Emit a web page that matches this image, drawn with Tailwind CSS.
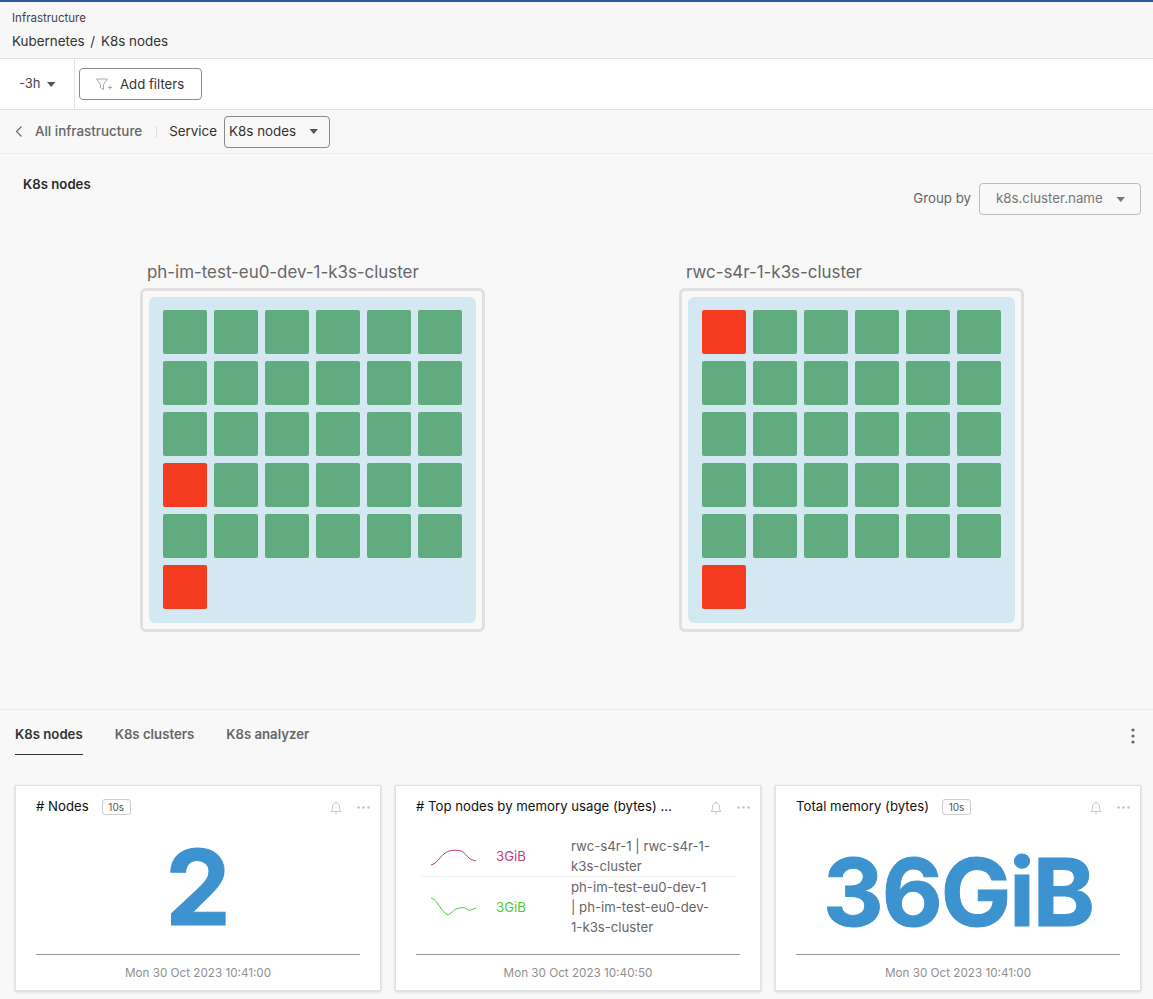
<!DOCTYPE html>
<html lang="en">
<head>
    <meta charset="UTF-8">
    <meta name="viewport" content="width=device-width, initial-scale=1.0">
    <title>K8s nodes</title>
    <script src="https://cdn.jsdelivr.net/npm/@tailwindcss/browser@4"></script>
</head>
<body class="bg-[#f8f8f8] font-['Inter','Liberation_Sans',sans-serif] text-[#333]">
<div class="h-[999px] w-[1153px] overflow-hidden">
    <div class="h-[2px] bg-[#2f5a9f]"></div>

    <header class="h-[57px] border-b border-[#e0e0e0] bg-[#f7f7f7] pl-3 pt-[9px]">
        <p class="text-[11.500px] leading-[14px] text-[#444]">Infrastructure</p>
        <p class="mt-[7px] text-[13.400px] leading-[18px] text-[#333]">Kubernetes <span class="mx-[2px]">/</span> K8s nodes</p>
    </header>

    <div class="flex h-[51px] items-center border-b border-[#e0e0e0] bg-white">
        <div class="flex h-full w-[75px] items-center border-r border-[#e4e4e4] pl-[19px] text-[13px] text-[#444]">
            -3h
            <svg class="ml-[6px]" width="9" height="5" viewBox="0 0 9 5"><path d="M0 0h8.500L4.200 5z" fill="#555"/></svg>
        </div>
        <button class="ml-[4px] flex h-[32px] w-[123px] items-center rounded-[4px] border border-[#8a8a8a] pl-4 pt-px text-[13.200px] text-[#333]">
            <svg class="mr-[7px]" width="17" height="13" viewBox="0 0 17 13" fill="none" stroke="#aaa" stroke-width="1"><path d="M.5 1h11L7.500 6.500v5l-3-2v-3z"/><path d="M12 9.500h4M14 7.500v4"/></svg>
            Add filters
        </button>
    </div>

    <nav class="flex h-[44px] items-center border-b border-[#ececec] bg-[#f8f8f8] text-[13.400px]">
        <svg class="ml-[15px]" width="8" height="11" viewBox="0 0 8 11" fill="none" stroke="#666" stroke-width="1.100"><path d="M6.500.5 1.500 5.500l5 5"/></svg>
        <span class="ml-3 font-medium text-[#666]">All infrastructure</span>
        <span class="ml-[14px] h-[12px] w-px bg-[#ddd]"></span>
        <span class="ml-3 text-[#333]">Service</span>
        <div class="ml-[7px] flex h-[32px] w-[106px] items-center justify-between rounded-[4px] border border-[#8a8a8a] pl-1 pr-[10px] text-[#333]">
            K8s nodes
            <svg width="10" height="5" viewBox="0 0 9 5"><path d="M0 0h8.500L4.200 5z" fill="#555"/></svg>
        </div>
    </nav>

    <main class="h-[556px] border-b border-[#ececec]">
        <div class="flex h-[106px] justify-between pl-[23px] pr-3">
            <h1 class="pt-[22px] text-[13.200px] leading-[16px] font-semibold text-[#2b2b2b]">K8s nodes</h1>
            <div class="flex h-fit items-center pt-[29px] text-[13.300px] text-[#666]">
                <span>Group by</span>
                <div class="ml-2 flex h-[32px] w-[162px] items-center justify-between rounded-[4px] border border-[#bbb] pl-4 pr-[14px] text-[#777]">
                    k8s.cluster.name
                    <svg width="10" height="5" viewBox="0 0 9 5"><path d="M0 0h8.500L4.200 5z" fill="#777"/></svg>
                </div>
            </div>
        </div>

        <div class="flex gap-[194px] pl-[140px]">
            <section class="w-[345px]">
                <h2 class="pl-[7px] text-[16.900px] leading-[24px] text-[#666]">ph-im-test-eu0-dev-1-k3s-cluster</h2>
                <div class="mt-[4px] h-[344px] rounded-[6px] border-[3px] border-[#e0e0e0] p-[6px]">
                    <div class="grid h-[326px] grid-cols-[repeat(6,44px)] grid-rows-[repeat(6,44px)] gap-[7px] rounded-[6px] bg-[#d4e8f2] py-[13px] pl-[14px] pr-[13px] [&>div]:rounded-[2px] [&>div]:bg-[#60ab80]">
                        <div></div><div></div><div></div><div></div><div></div><div></div>
                        <div></div><div></div><div></div><div></div><div></div><div></div>
                        <div></div><div></div><div></div><div></div><div></div><div></div>
                        <div class="!bg-[#f53b20]"></div><div></div><div></div><div></div><div></div><div></div>
                        <div></div><div></div><div></div><div></div><div></div><div></div>
                        <div class="!bg-[#f53b20]"></div>
                    </div>
                </div>
            </section>
            <section class="w-[345px]">
                <h2 class="pl-[7px] text-[16.900px] leading-[24px] text-[#666]">rwc-s4r-1-k3s-cluster</h2>
                <div class="mt-[4px] h-[344px] rounded-[6px] border-[3px] border-[#e0e0e0] p-[6px]">
                    <div class="grid h-[326px] grid-cols-[repeat(6,44px)] grid-rows-[repeat(6,44px)] gap-[7px] rounded-[6px] bg-[#d4e8f2] py-[13px] pl-[14px] pr-[13px] [&>div]:rounded-[2px] [&>div]:bg-[#60ab80]">
                        <div class="!bg-[#f53b20]"></div><div></div><div></div><div></div><div></div><div></div>
                        <div></div><div></div><div></div><div></div><div></div><div></div>
                        <div></div><div></div><div></div><div></div><div></div><div></div>
                        <div></div><div></div><div></div><div></div><div></div><div></div>
                        <div></div><div></div><div></div><div></div><div></div><div></div>
                        <div class="!bg-[#f53b20]"></div>
                    </div>
                </div>
            </section>
        </div>
    </main>

    <div class="flex h-[45px] items-start justify-between pl-[15px] pr-[18px] text-[13.200px] font-semibold">
        <div class="flex gap-8">
            <a class="h-[45px] border-b border-[#333] pt-[15px] leading-[18px] text-[#333]">K8s nodes</a>
            <a class="pt-[15px] leading-[18px] text-[#666]">K8s clusters</a>
            <a class="pt-[15px] leading-[18px] text-[#666]">K8s analyzer</a>
        </div>
        <svg class="mt-[18px]" width="4" height="16" viewBox="0 0 4 16" fill="#666"><circle cx="2" cy="2" r="1.600"/><circle cx="2" cy="8" r="1.600"/><circle cx="2" cy="14" r="1.600"/></svg>
    </div>

    <div class="mt-[30px] flex gap-[14px] pl-[15px]">
        <article class="flex h-[206px] w-[366px] flex-col border border-[#e0e0e0] bg-white shadow-[0_1px_3px_rgba(0,0,0,0.14)]">
            <div class="flex h-[42px] items-center pl-5 pr-[10px]">
                <h3 class="text-[13.200px] text-[#111]"># Nodes</h3>
                <span class="ml-[13px] flex h-[16px] w-[29px] items-center justify-center rounded-[3px] border border-[#ccc] text-[10px] text-[#555]">10s</span>
                <svg class="ml-auto" width="12" height="14" viewBox="0 0 12 14" fill="none" stroke="#c4c4c4"><path d="M1 11.500c1.200-1 1.500-2 1.500-4.500s1.300-4 3.500-4 3.500 1.500 3.500 4 .3 3.500 1.500 4.500zM6 1.500v1.500M5 13.200h2"/></svg>
                <svg class="ml-[15px]" width="13" height="3" viewBox="0 0 13 3" fill="#c4c4c4"><circle cx="1.500" cy="1.500" r="1.300"/><circle cx="6.500" cy="1.500" r="1.300"/><circle cx="11.500" cy="1.500" r="1.300"/></svg>
            </div>
            <div class="mx-5 flex h-[127px] items-center justify-center border-b border-[#999] pb-[8px] text-[104px] leading-none font-bold text-[#3d92d0] [-webkit-text-stroke:1px_#3d92d0]">2</div>
            <p class="pt-[11px] text-center text-[11.700px] leading-[14px] text-[#8f8f8f]">Mon 30 Oct 2023 10:41:00</p>
        </article>

        <article class="flex h-[206px] w-[366px] flex-col border border-[#e0e0e0] bg-white shadow-[0_1px_3px_rgba(0,0,0,0.14)]">
            <div class="flex h-[42px] items-center pl-5 pr-[10px]">
                <h3 class="text-[13.200px] text-[#111]"># Top nodes by memory usage (bytes) …</h3>
                <svg class="ml-auto" width="12" height="14" viewBox="0 0 12 14" fill="none" stroke="#c4c4c4"><path d="M1 11.500c1.200-1 1.500-2 1.500-4.500s1.300-4 3.500-4 3.500 1.500 3.500 4 .3 3.500 1.500 4.500zM6 1.500v1.500M5 13.200h2"/></svg>
                <svg class="ml-[15px]" width="13" height="3" viewBox="0 0 13 3" fill="#c4c4c4"><circle cx="1.500" cy="1.500" r="1.300"/><circle cx="6.500" cy="1.500" r="1.300"/><circle cx="11.500" cy="1.500" r="1.300"/></svg>
            </div>
            <div class="mx-5 h-[127px] border-b border-[#999] pt-2">
                <div class="mx-[5px] flex h-[41px] items-center border-b border-[#eee] pl-[10px] text-[13.200px] leading-[20px]">
                    <svg width="46" height="20" viewBox="0 0 46 20" fill="none" stroke="#b8408c"><path d="M0 19c3-1 5-2 8-6s7-7 10-8 9-1 12 0 6 5 8 7 4 2 7 3"/></svg>
                    <span class="ml-[19px] w-[75px] text-[#b8408c]">3GiB</span>
                    <span class="w-[140px] text-[#666]">rwc-s4r-1 | rwc-s4r-1-k3s-cluster</span>
                </div>
                <div class="mx-[5px] flex h-[60px] items-center pl-[10px] text-[13.200px] leading-[20px]">
                    <svg width="46" height="20" viewBox="0 0 46 20" fill="none" stroke="#49cc37"><path d="M0 1c3 1 5 3 7 6s5 7 8 10 7-4 10-5 7-2 9-1 4 3 6 2 3-1 5-2"/></svg>
                    <span class="ml-[19px] w-[75px] text-[#49cc37]">3GiB</span>
                    <span class="w-[140px] text-[#666]">ph-im-test-eu0-dev-1 | ph-im-test-eu0-dev-1-k3s-cluster</span>
                </div>
            </div>
            <p class="pt-[11px] text-center text-[11.700px] leading-[14px] text-[#8f8f8f]">Mon 30 Oct 2023 10:40:50</p>
        </article>

        <article class="flex h-[206px] w-[366px] flex-col border border-[#e0e0e0] bg-white shadow-[0_1px_3px_rgba(0,0,0,0.14)]">
            <div class="flex h-[42px] items-center pl-5 pr-[10px]">
                <h3 class="text-[13.200px] text-[#111]">Total memory (bytes)</h3>
                <span class="ml-[13px] flex h-[16px] w-[29px] items-center justify-center rounded-[3px] border border-[#ccc] text-[10px] text-[#555]">10s</span>
                <svg class="ml-auto" width="12" height="14" viewBox="0 0 12 14" fill="none" stroke="#c4c4c4"><path d="M1 11.500c1.200-1 1.500-2 1.500-4.500s1.300-4 3.500-4 3.500 1.500 3.500 4 .3 3.500 1.500 4.500zM6 1.500v1.500M5 13.200h2"/></svg>
                <svg class="ml-[15px]" width="13" height="3" viewBox="0 0 13 3" fill="#c4c4c4"><circle cx="1.500" cy="1.500" r="1.300"/><circle cx="6.500" cy="1.500" r="1.300"/><circle cx="11.500" cy="1.500" r="1.300"/></svg>
            </div>
            <div class="mx-5 flex h-[127px] items-center justify-center whitespace-nowrap border-b border-[#999] pt-[2px] text-[94px] leading-none tracking-[-2px] font-bold text-[#3d92d0] [-webkit-text-stroke:1px_#3d92d0]">36GiB</div>
            <p class="pt-[11px] text-center text-[11.700px] leading-[14px] text-[#8f8f8f]">Mon 30 Oct 2023 10:41:00</p>
        </article>
    </div>
</div>
</body>
</html>
